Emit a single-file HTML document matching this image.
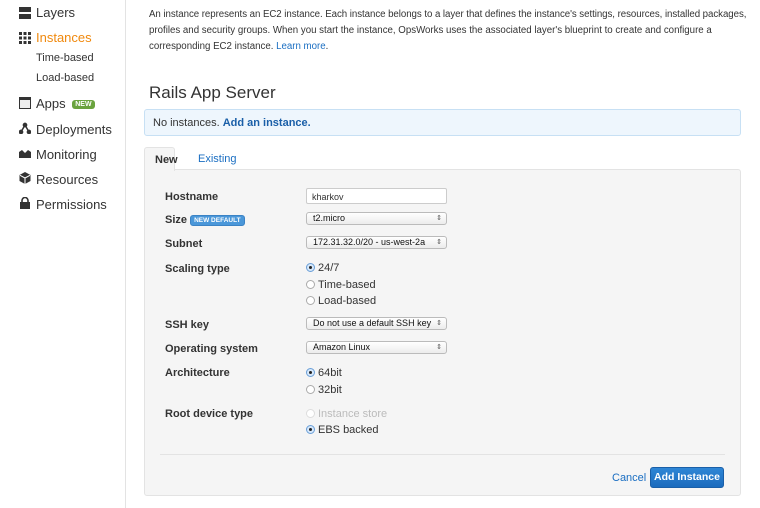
<!DOCTYPE html>
<html><head><style>
*{box-sizing:border-box;margin:0;padding:0}
body{width:760px;height:508px;overflow:hidden;background:#fff;font-family:"Liberation Sans",Arial,sans-serif;color:#333;position:relative}
.a{position:absolute}
.side{left:0;top:0;width:126px;height:508px;border-right:1px solid #e3e3e3}
.nav{font-size:13px;color:#333;left:36px}
.sub{font-size:11px;color:#333;left:36px}
.ic{left:19px;width:12px;height:12px}
.p{font-size:9.7px;line-height:16px;left:149px;color:#333;white-space:nowrap}
a{color:#1a6ec2;text-decoration:none}
.lbl{left:165px;font-size:11px;font-weight:bold;color:#333}
.sel{left:306px;width:141px;height:13px;border:1px solid #bbb;border-radius:3px;background:linear-gradient(#fff,#ececec);font-size:9px;padding-left:6px;line-height:11px;color:#111;white-space:nowrap}
.sel:after{content:"⇕";position:absolute;right:4px;top:0;font-size:7px;color:#555}
.r{left:306px;font-size:11px;color:#333;line-height:12px;white-space:nowrap}
.r i{display:inline-block;width:9px;height:9px;border:1px solid #aaa;border-radius:50%;background:#fff;vertical-align:-1px;margin-right:3px;position:relative}
.r i.on{border-color:#6a9fd8;background:#d6e8fb}
.r i.on:after{content:"";position:absolute;left:2px;top:2px;width:3px;height:3px;border-radius:50%;background:#222}
</style></head><body>
<div class="a side"></div>
<div class="a ic" style="top:7px"><div style="height:5px;background:#333"></div><div style="height:5px;background:#333;margin-top:2px"></div></div>
<div class="a nav" style="top:5px">Layers</div>
<svg class="a ic" style="top:32px" viewBox="0 0 12 12" fill="#333"><rect x="0" y="0" width="3" height="3"/><rect x="4.5" y="0" width="3" height="3"/><rect x="9" y="0" width="3" height="3"/><rect x="0" y="4.5" width="3" height="3"/><rect x="4.5" y="4.5" width="3" height="3"/><rect x="9" y="4.5" width="3" height="3"/><rect x="0" y="9" width="3" height="3"/><rect x="4.5" y="9" width="3" height="3"/><rect x="9" y="9" width="3" height="3"/></svg>
<div class="a nav" style="top:30px;color:#f0890e">Instances</div>
<div class="a sub" style="top:52px">Time-based</div>
<div class="a sub" style="top:72px">Load-based</div>
<div class="a ic" style="top:97px;border:1px solid #333;border-top:3px solid #333;background:#eee"></div>
<div class="a nav" style="top:96px">Apps <span style="display:inline-block;background:#6aa33e;color:#fff;font-size:7px;font-weight:bold;padding:1px 3px;border-radius:3px;vertical-align:2px;margin-left:3px">NEW</span></div>
<svg class="a ic" style="top:122px" viewBox="0 0 12 12" fill="none" stroke="#333" stroke-width="1.5"><path d="M2 10L6 3L10 10"/><circle cx="6" cy="3" r="1.6" fill="#333"/><circle cx="2" cy="10" r="1.6" fill="#333"/><circle cx="10" cy="10" r="1.6" fill="#333"/></svg>
<div class="a nav" style="top:122px">Deployments</div>
<svg class="a ic" style="top:147px" viewBox="0 0 12 12" fill="#333"><path d="M0 11V5L3 3L6 6L9 3L12 5V11Z"/></svg>
<div class="a nav" style="top:147px">Monitoring</div>
<svg class="a ic" style="top:172px" viewBox="0 0 12 12" fill="#333"><path d="M6 0L11.5 3V9L6 12L0.5 9V3Z"/><path d="M1 3.3L6 6L11 3.3M6 6V12" stroke="#fff" fill="none"/></svg>
<div class="a nav" style="top:172px">Resources</div>
<svg class="a ic" style="top:197px" viewBox="0 0 12 12"><rect x="1" y="5" width="10" height="7" fill="#333"/><path d="M3 5V3.5a3 3 0 0 1 6 0V5" stroke="#333" stroke-width="1.6" fill="none"/></svg>
<div class="a nav" style="top:197px">Permissions</div>

<div class="a p" style="top:7px"><span style="letter-spacing:-0.05px">An instance represents an EC2 instance. Each instance belongs to a layer that defines the instance's settings, resources, installed packages,</span><br>profiles and security groups. When you start the instance, OpsWorks uses the associated layer's blueprint to create and configure a<br>corresponding EC2 instance. <a>Learn more</a>.</div>
<div class="a" style="left:149px;top:83px;font-size:17px;color:#333">Rails App Server</div>
<div class="a" style="left:144px;top:109px;width:597px;height:27px;background:#eef6fd;border:1px solid #c7e0f4;border-radius:3px;font-size:11px;padding:7px 8px">No instances. <a style="font-weight:bold;color:#1a5fa8">Add an instance.</a></div>
<div class="a" style="left:144px;top:169px;width:597px;height:327px;background:#f5f5f5;border:1px solid #e3e3e3;border-radius:3px"></div>
<div class="a" style="left:144px;top:147px;width:31px;height:24px;background:#f5f5f5;border:1px solid #e3e3e3;border-bottom:none;border-radius:3px 3px 0 0;font-size:11px;font-weight:bold;padding:6px 0 0 10px">New</div>
<div class="a" style="left:198px;top:153px;font-size:11px;color:#1a6ec2">Existing</div>

<div class="a lbl" style="top:191px">Hostname</div>
<div class="a" style="left:306px;top:188px;width:141px;height:16px;background:#fff;border:1px solid #ccc;border-radius:2px;font-size:9px;padding:3px 5px">kharkov</div>
<div class="a lbl" style="top:214px">Size <span style="display:inline-block;background:#4a97d9;color:#fff;font-size:6.5px;padding:1px 3px;border-radius:3px;vertical-align:1px;border:1px solid #3b83c5">NEW DEFAULT</span></div>
<div class="a sel" style="top:212px">t2.micro</div>
<div class="a lbl" style="top:238px">Subnet</div>
<div class="a sel" style="top:236px">172.31.32.0/20 - us-west-2a</div>
<div class="a lbl" style="top:263px">Scaling type</div>
<div class="a r" style="top:262px"><i class="on"></i>24/7</div>
<div class="a r" style="top:279px"><i></i>Time-based</div>
<div class="a r" style="top:295px"><i></i>Load-based</div>
<div class="a lbl" style="top:319px">SSH key</div>
<div class="a sel" style="top:317px">Do not use a default SSH key</div>
<div class="a lbl" style="top:343px">Operating system</div>
<div class="a sel" style="top:341px">Amazon Linux</div>
<div class="a lbl" style="top:367px">Architecture</div>
<div class="a r" style="top:367px"><i class="on"></i>64bit</div>
<div class="a r" style="top:384px"><i></i>32bit</div>
<div class="a lbl" style="top:408px">Root device type</div>
<div class="a r" style="top:408px;color:#bbb"><i style="border-color:#ddd"></i>Instance store</div>
<div class="a r" style="top:424px"><i class="on"></i>EBS backed</div>
<div class="a" style="left:160px;top:454px;width:565px;border-top:1px solid #e3e3e3"></div>
<div class="a" style="left:612px;top:472px;font-size:11px;color:#1a6ec2">Cancel</div>
<div class="a" style="left:650px;top:467px;width:74px;height:21px;background:linear-gradient(#2f86d6,#1b6bbd);border:1px solid #1a5fa8;border-radius:3px;color:#fff;font-size:10.5px;font-weight:bold;text-align:center;line-height:19px;white-space:nowrap">Add Instance</div>
</body></html>
